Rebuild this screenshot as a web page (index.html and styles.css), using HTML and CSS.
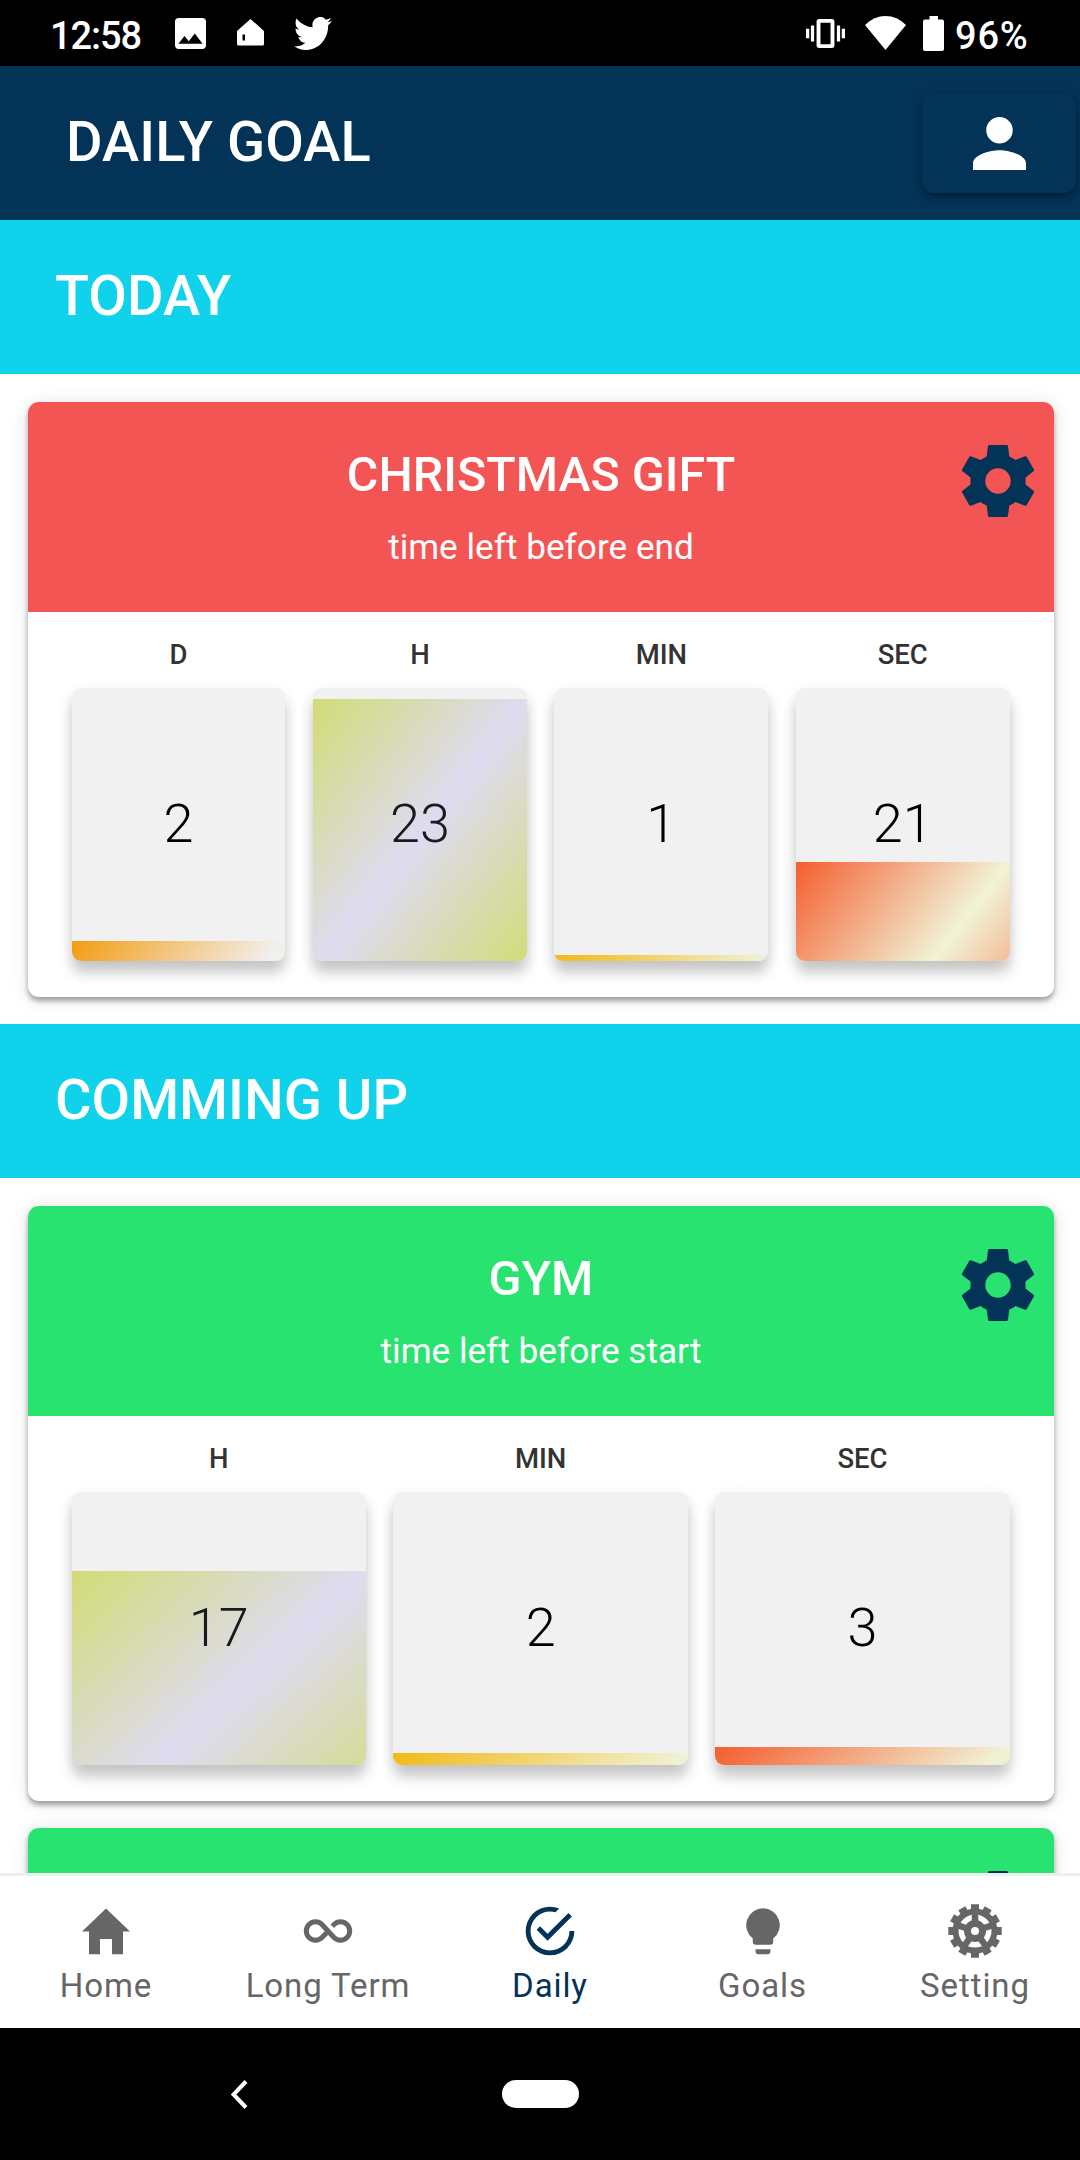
FILE: index.html
```html
<!DOCTYPE html>
<html lang="en">
<head>
<meta charset="utf-8">
<title>Daily Goal</title>
<link rel="stylesheet" href="styles.css">
</head>
<body>
<div class="phone">
  <div class="status">
    <span class="clock">12:58</span>
    <svg class="st-image" viewBox="3 3 18 18" preserveAspectRatio="none"><path fill="#fff" d="M21 19V5c0-1.100-.9-2-2-2H5c-1.100 0-2 .9-2 2v14c0 1.100.9 2 2 2h14c1.100 0 2-.9 2-2zM8.500 13.500l2.500 3.010L14.500 12l4.500 6H5l3.500-4.500z"/></svg>
    <svg class="st-home" viewBox="0 0 27 27"><path fill="#fff" fill-rule="evenodd" d="M13.500 0 27 12v13a1.500 1.500 0 0 1-1.500 1.500h-24A1.500 1.500 0 0 1 0 25V12zM5.500 15.500v6h2.500v-6z"/></svg>
    <svg class="st-bird" viewBox="0 2.250 24 19.500" preserveAspectRatio="none"><path fill="#fff" d="M23.953 4.570a10 10 0 01-2.825.775 4.958 4.958 0 002.163-2.723c-.951.555-2.005.959-3.127 1.184a4.920 4.920 0 00-8.384 4.482C7.690 8.095 4.067 6.130 1.640 3.162a4.822 4.822 0 00-.666 2.475c0 1.710.87 3.213 2.188 4.096a4.904 4.904 0 01-2.228-.616v.06a4.923 4.923 0 003.946 4.827 4.996 4.996 0 01-2.212.085 4.936 4.936 0 004.604 3.417 9.867 9.867 0 01-6.102 2.105c-.39 0-.779-.023-1.170-.067a13.995 13.995 0 007.557 2.209c9.053 0 13.998-7.496 13.998-13.985 0-.21 0-.42-.015-.63A9.935 9.935 0 0024 4.590z"/></svg>
    <svg class="st-vibrate" viewBox="0 0 24 18" preserveAspectRatio="none"><path fill="#fff" d="M0 12h2V6H0v6zm3 2h2V4H3v10zm19-8v6h2V6h-2zm-3 8h2V4h-2v10zM16 0H8C7.170 0 6.500.67 6.500 1.500v15c0 .83.67 1.500 1.500 1.500h8c.83 0 1.500-.67 1.500-1.500v-15c0-.83-.67-1.500-1.500-1.500zm-.9 15.700H8.900V2.300h6.200v13.400z"/></svg>
    <svg class="st-wifi" viewBox="0 0 41 34"><path fill="#fff" d="M0 9Q9 0 20.500 0T41 9L20.500 34z"/></svg>
    <svg class="st-battery" viewBox="0 0 21 35"><path fill="#fff" d="M6.500 0h8.500v3.500h4a2 2 0 0 1 2 2V33a2 2 0 0 1-2 2H2a2 2 0 0 1-2-2V5.500a2 2 0 0 1 2-2h4.500z"/></svg>
    <span class="percent">96%</span>
  </div>

  <header class="appbar">
    <h1 class="appbar-title">DAILY GOAL</h1>
    <button class="profile" aria-label="Profile"><svg viewBox="4 4 16 16" preserveAspectRatio="none"><path fill="#fff" d="M12 12c2.210 0 4-1.790 4-4s-1.790-4-4-4-4 1.790-4 4 1.790 4 4 4zm0 2c-2.670 0-8 1.340-8 4v2h16v-2c0-2.660-5.330-4-8-4z"/></svg></button>
  </header>

  <main class="content">
    <h2 class="band">TODAY</h2>
    <section class="card">
      <div class="card-head card-head-red">
        <h3 class="card-title">CHRISTMAS GIFT</h3>
        <p class="card-sub">time left before end</p>
        <svg class="gear" viewBox="0 0 72 72"><use href="#gear"/></svg>
      </div>
      <div class="tiles">
        <div class="unit"><span class="unit-label">D</span><div class="tile"><div class="fill days" style="height:20px"></div><span class="num">2</span></div></div>
        <div class="unit"><span class="unit-label">H</span><div class="tile"><div class="fill hours" style="height:262px"></div><span class="num num-soft">23</span></div></div>
        <div class="unit"><span class="unit-label">MIN</span><div class="tile"><div class="fill minutes" style="height:6px"></div><span class="num">1</span></div></div>
        <div class="unit"><span class="unit-label">SEC</span><div class="tile"><div class="fill seconds" style="height:99px"></div><span class="num">21</span></div></div>
      </div>
    </section>

    <h2 class="band">COMMING UP</h2>
    <section class="card">
      <div class="card-head card-head-green">
        <h3 class="card-title">GYM</h3>
        <p class="card-sub">time left before start</p>
        <svg class="gear" viewBox="0 0 72 72"><use href="#gear"/></svg>
      </div>
      <div class="tiles">
        <div class="unit"><span class="unit-label">H</span><div class="tile"><div class="fill hours" style="height:194px"></div><span class="num num-soft">17</span></div></div>
        <div class="unit"><span class="unit-label">MIN</span><div class="tile"><div class="fill minutes" style="height:12px"></div><span class="num">2</span></div></div>
        <div class="unit"><span class="unit-label">SEC</span><div class="tile"><div class="fill seconds" style="height:18px"></div><span class="num">3</span></div></div>
      </div>
    </section>
    <section class="card">
      <div class="card-head card-head-green">
        <svg class="gear" viewBox="0 0 72 72"><use href="#gear"/></svg>
      </div>
    </section>
  </main>

  <nav class="tabs">
    <a class="tab"><svg viewBox="0 0 56 56"><path d="M28 5.500 52 28.500h-7v22.700H34V36H22v15.200H11V28.500H4z"/></svg><span>Home</span></a>
    <a class="tab tab-long"><svg viewBox="0 0 56 56"><path class="loop" d="M32.300 23.200 34 21.500A9.200 9.200 0 1 1 34 34.500L22 21.500A9.200 9.200 0 1 0 22 34.500L28 28.500"/></svg><span>Long Term</span></a>
    <a class="tab tab-daily"><svg viewBox=".5 .5 23 23"><path d="M20 12a8 8 0 0 1-8 8 8 8 0 0 1-8-8 8 8 0 0 1 8-8c.76 0 1.500.11 2.200.31l1.570-1.570A9.822 9.822 0 0 0 12 2 10 10 0 0 0 2 12a10 10 0 0 0 10 10 10 10 0 0 0 10-10M7.910 10.080 6.500 11.500 11 16 21 6l-1.410-1.420L11 13.170z"/></svg><span>Daily</span></a>
    <a class="tab tab-goals"><svg viewBox="-.75 -.9 57.500 57.500"><path d="M28 4.500a17.300 17.300 0 0 1 10.500 31V39a3 3 0 0 1-3 3h-15a3 3 0 0 1-3-3v-3.500A17.300 17.300 0 0 1 28 4.500zM20.300 46.500h15.400v1.800a3.500 3.500 0 0 1-3.500 3.500h-8.400a3.500 3.500 0 0 1-3.500-3.500z"/></svg><span>Goals</span></a>
    <a class="tab"><svg viewBox="-28 -28 56 56"><use href="#wheel"/></svg><span>Setting</span></a>
  </nav>

  <div class="sysnav">
    <svg class="back" viewBox="0 0 17 29"><path d="M15 1.500 2.500 14.500 15 27.500" fill="none" stroke="#fff" stroke-width="4"/></svg>
    <div class="pill"></div>
  </div>
</div>

<svg class="defs" width="0" height="0">
  <defs>
    <path id="gear" fill="#043358" fill-rule="evenodd" d="M27.500 0h17a1.500 1.500 0 0 1 1.500 1.300L47.300 11.500Q51 13 53.500 15L63 11.300a1.500 1.500 0 0 1 1.800.6l7.100 12.500a1.500 1.500 0 0 1-.4 1.900L63.500 32.500v7l8 6.200a1.500 1.500 0 0 1 .4 1.900l-7.100 12.500a1.500 1.500 0 0 1-1.800.6L53.500 57Q51 59 47.300 60.500L46 70.700a1.500 1.500 0 0 1-1.500 1.300h-17a1.500 1.500 0 0 1-1.500-1.300L24.700 60.500Q21 59 18.500 57L9 60.700a1.500 1.500 0 0 1-1.800-.6L.1 47.600a1.500 1.500 0 0 1 .4-1.900L8.500 39.500v-7L.5 26.300a1.500 1.500 0 0 1-.4-1.900L7.200 11.900A1.500 1.500 0 0 1 9 11.300L18.500 15Q21 13 24.700 11.500L26 1.300A1.500 1.500 0 0 1 27.500 0zM36 23.300a12.700 12.700 0 1 0 0 25.400 12.700 12.700 0 0 0 0-25.400z"/>
    <g id="wheel" fill="none" stroke="#666">
      <circle r="19.500" stroke-width="6"/>
      <path stroke-width="8" d="M0-21V-26.700M0 21V26.700M-21 0H-26.700M21 0H26.700M10.500-18.190 13.200-22.860M18.190-10.500 22.860-13.200M18.190 10.500 22.860 13.200M10.500 18.190 13.200 22.860M-10.500 18.190-13.200 22.860M-18.190 10.500-22.860 13.200M-18.190-10.500-22.860-13.200M-10.500-18.190-13.200-22.860"/>
      <circle r="7.500" stroke-width="7"/>
      <path stroke-width="6.500" d="M0-8V-18M7.600-2.500 17.100-5.600M4.700 6.500 10.600 14.600M-4.700 6.500-10.600 14.600M-7.600-2.500-17.100-5.600"/>
    </g>
  </defs>
</svg>
</body>
</html>
```
FILE: styles.css
```css
* { box-sizing: border-box; }
body { margin: 0; background: #fff; font-family: Roboto, "Liberation Sans", sans-serif; }
h1, h2, h3, p { margin: 0; }
svg { display: block; flex: none; }
.defs { position: absolute; }
.phone { width: 1080px; height: 2160px; display: flex; flex-direction: column; overflow: hidden; }

.status { height: 66px; flex: none; background: #000; color: #fff; display: flex; align-items: flex-start; padding-left: 50px; }
.clock, .percent { font-size: 38px; font-weight: 500; line-height: 66px; padding-top: 3px; }
.clock { letter-spacing: -1.100px; width: 125px; }
.percent { letter-spacing: .8px; width: 125px; margin-left: 11px; }
.st-image { width: 31px; height: 31px; margin-top: 18px; }
.st-home { width: 27px; height: 27px; margin: 19px 0 0 31px; }
.st-bird { width: 38px; height: 33px; margin: 17px 0 0 30px; }
.st-vibrate { width: 39px; height: 29px; margin: 19px 0 0 auto; }
.st-wifi { width: 41px; height: 34px; margin: 16px 0 0 20px; }
.st-battery { width: 21px; height: 35px; margin: 16px 0 0 17px; }

.appbar { height: 154px; flex: none; background: #043358; display: flex; align-items: flex-start; justify-content: space-between; padding: 28px 4px 0 66px; }
.appbar-title { color: #fff; font-size: 56px; font-weight: 500; line-height: 96px; letter-spacing: .1px; }
.profile { width: 154px; height: 99px; margin: 0; padding: 23px 0 0 0; border: 0; border-radius: 12px; background: #043358; box-shadow: 0 4px 6px rgba(0,0,0,.3), 0 1px 12px rgba(0,0,0,.12); display: flex; justify-content: center; }
.profile svg { width: 53px; height: 53px; }

.content { flex: 1; min-height: 0; overflow: hidden; background: #fff; }
.band { height: 154px; background: #10d2eb; color: #fff; font-size: 56px; font-weight: 500; line-height: 153px; padding-left: 55px; }
.card { width: 1026px; margin: 28px 0 27px 28px; border-radius: 11px; background: #fff; box-shadow: 0 4px 5px rgba(0,0,0,.32), 0 2px 18px rgba(0,0,0,.13); }
.card + .card { margin-top: 27px; }
.card-head { position: relative; height: 210px; border-radius: 11px 11px 0 0; color: #fff; text-align: center; padding-top: 42px; }
.card-head-red { background: #f35554; }
.card-head-green { background: #29e371; }
.card-title { font-size: 48.400px; font-weight: 500; line-height: 62px; }
.card-sub { font-size: 35.200px; line-height: 44px; margin-top: 19px; }
.gear { position: absolute; right: 20px; top: 43px; width: 72px; height: 72px; }
.tiles { height: 385px; padding: 22px 44.300px 0 43.500px; display: flex; gap: 27.500px; }
.unit { flex: 1; min-width: 0; display: flex; flex-direction: column; text-align: center; }
.unit-label { font-size: 27.500px; font-weight: 500; color: #333; line-height: 42px; height: 54px; }
.tile { height: 273px; border-radius: 9px; background: #f1f1f1; display: grid; overflow: hidden; box-shadow: 0 12px 14px rgba(0,0,0,.2), 0 3px 16px rgba(0,0,0,.06); }
.fill, .num { grid-area: 1 / 1; }
.fill { align-self: end; background-size: 100% 273px; background-repeat: no-repeat; }
.days { background-image: linear-gradient(to bottom right, #f39c12, #f1f1f1 50%, #f39c12); }
.hours { background-image: linear-gradient(to bottom right, #d1dc74, #dfdbf1 50%, #d1dc74); }
.minutes { background-image: linear-gradient(to bottom right, #f1b915, #f0f2d5 50%, #f1b915); }
.seconds { background-image: linear-gradient(to bottom right, #f55d2e, #f1f3d6 50%, #f55d2e); }
.num { font-size: 54px; font-weight: 300; color: #000; line-height: 272px; }
.num-soft { color: #191920; }

.tabs { height: 155px; flex: none; border-top: 3px solid #eee; background: #fff; display: flex; }
.tab { width: 212px; flex: none; display: flex; flex-direction: column; align-items: center; color: #666; font-size: 33px; letter-spacing: .9px; line-height: 40px; padding-top: 27px; gap: 7px; }
.tab svg { width: 56px; height: 56px; fill: #666; }
.tab .loop { fill: none; stroke: #666; stroke-width: 5; }
.tab-long { width: 232px; }
.tab-goals { width: 213px; }
.tab-daily { color: #043358; }
.tab-daily svg { fill: #043358; }

.sysnav { height: 132px; flex: none; background: #000; display: flex; align-items: center; padding-left: 231px; }
.back { width: 17px; height: 29px; }
.pill { width: 77px; height: 28px; border-radius: 14px; background: #fff; margin-left: 254px; }
```
